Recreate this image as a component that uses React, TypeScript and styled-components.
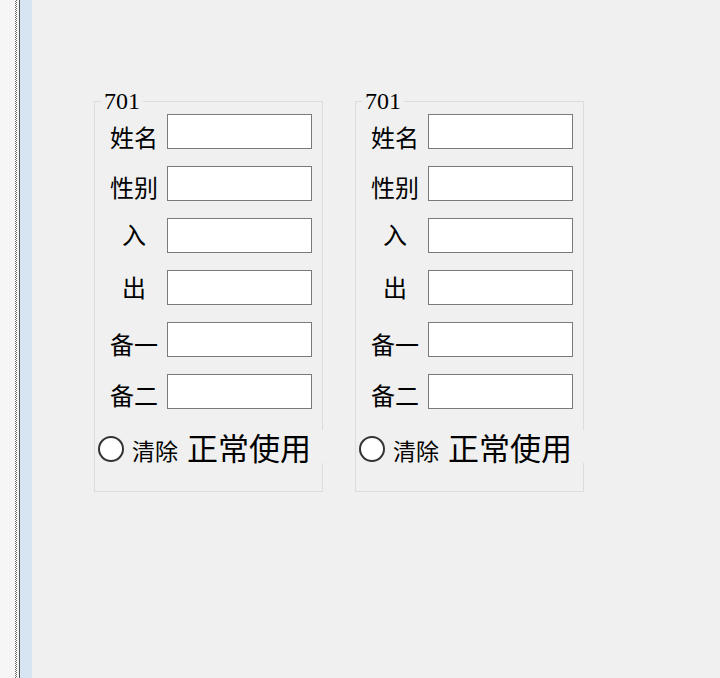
import React from "react";
import styled, { createGlobalStyle } from "styled-components";

const GlobalStyle = createGlobalStyle`
	html, body, #root {
		margin: 0;
		padding: 0;
		height: 100%;
	}
	body {
		background: #f0f0f0;
		font-family: "Liberation Serif", "Noto Sans CJK SC", serif;
		color: #000;
	}
`;

interface Field {
	label: string;
	shift: number;
}

const fields: Field[] = [
	{ label: "姓名", shift: 5 },
	{ label: "性别", shift: 3 },
	{ label: "入", shift: -2 },
	{ label: "出", shift: -1 },
	{ label: "备一", shift: 4 },
	{ label: "备二", shift: 3 },
];

const rooms = ["701", "701"];

const RoomPanel: React.FC<{ title: string }> = ({ title }) => {
	return (
		<Panel>
			<Legend>{title}</Legend>
			<Rows>
				{fields.map((f, i) => (
					<Row key={i}>
						<Label $shift={f.shift}>{f.label}</Label>
						<Input type="text" />
					</Row>
				))}
			</Rows>
			<Footer>
				<Radio />
				<ClearText>清除</ClearText>
				<StatusText>正常使用</StatusText>
			</Footer>
		</Panel>
	);
};

const App: React.FC = () => {
	return (
		<Page>
			<GlobalStyle />
			<Gutter>
				<GutterPlain />
				<GutterDots />
				<GutterGap />
				<GutterLine />
				<GutterBlue />
			</Gutter>
			<Main>
				{rooms.map((r, i) => (
					<RoomPanel key={i} title={r} />
				))}
			</Main>
		</Page>
	);
};

export default App;

const Page = styled.div`
	display: flex;
	min-height: 100vh;
	background: #f0f0f0;
`;
const Gutter = styled.div`
	display: flex;
	width: 32px;
	flex-shrink: 0;
`;
const GutterPlain = styled.div`
	width: 15px;
	background: #f6f6f6;
`;
const GutterDots = styled.div`
	width: 2px;
	background: repeating-conic-gradient(#6a6a6a 0 25%, #ffffff 0 50%) 0 0 / 2px 2px;
`;
const GutterGap = styled.div`
	width: 2px;
	background: #f4f4f4;
`;
const GutterLine = styled.div`
	width: 1px;
	background: #505050;
`;
const GutterBlue = styled.div`
	width: 12px;
	background: #d7e5f3;
`;
const Main = styled.div`
	display: flex;
	align-items: flex-start;
	gap: 32px;
	padding: 90px 0 0 62px;
`;
const Panel = styled.fieldset`
	margin: 0;
	width: 229px;
	box-sizing: border-box;
	border: 1px solid #dcdcdc;
	padding: 2px 10px 28px 14px;
	min-width: 0;
`;
const Legend = styled.legend`
	margin-left: -8px;
	padding: 0 3px;
	font-size: 24px;
	line-height: 22px;
	font-family: "Liberation Serif", serif;
`;
const Rows = styled.div`
	display: flex;
	flex-direction: column;
	gap: 17px;
`;
const Row = styled.div`
	display: flex;
	align-items: center;
	gap: 8px;
	height: 35px;
`;
const Label = styled.span<{ $shift: number }>`
	width: 50px;
	text-align: center;
	font-size: 24px;
	line-height: 24px;
	font-family: "Noto Sans CJK SC", sans-serif;
	position: relative;
	top: ${(p) => p.$shift}px;
	white-space: nowrap;
`;
const Input = styled.input`
	width: 145px;
	height: 35px;
	box-sizing: border-box;
	border: 1px solid #7a7a7a;
	background: #fff;
	margin: 0;
	padding: 2px 4px;
	outline: none;
`;
const Footer = styled.div`
	display: flex;
	align-items: flex-end;
	height: 33px;
	margin: 21px 0 0 -10px;
`;
const Radio = styled.span`
	width: 26px;
	height: 26px;
	box-sizing: border-box;
	border: 2px solid #333;
	border-radius: 50%;
	background: #fff;
	margin: 0 0 1px -1px;
	flex-shrink: 0;
`;
const ClearText = styled.span`
	margin-left: 8px;
	font-size: 23px;
	line-height: 26px;
	font-family: "Noto Sans CJK SC", sans-serif;
	white-space: nowrap;
`;
const StatusText = styled.span`
	margin-left: 9px;
	margin-right: -16px;
	padding-right: 16px;
	font-size: 31px;
	line-height: 33px;
	font-family: "Noto Sans CJK SC", sans-serif;
	background: #f0f0f0;
	white-space: nowrap;
	position: relative;
`;
